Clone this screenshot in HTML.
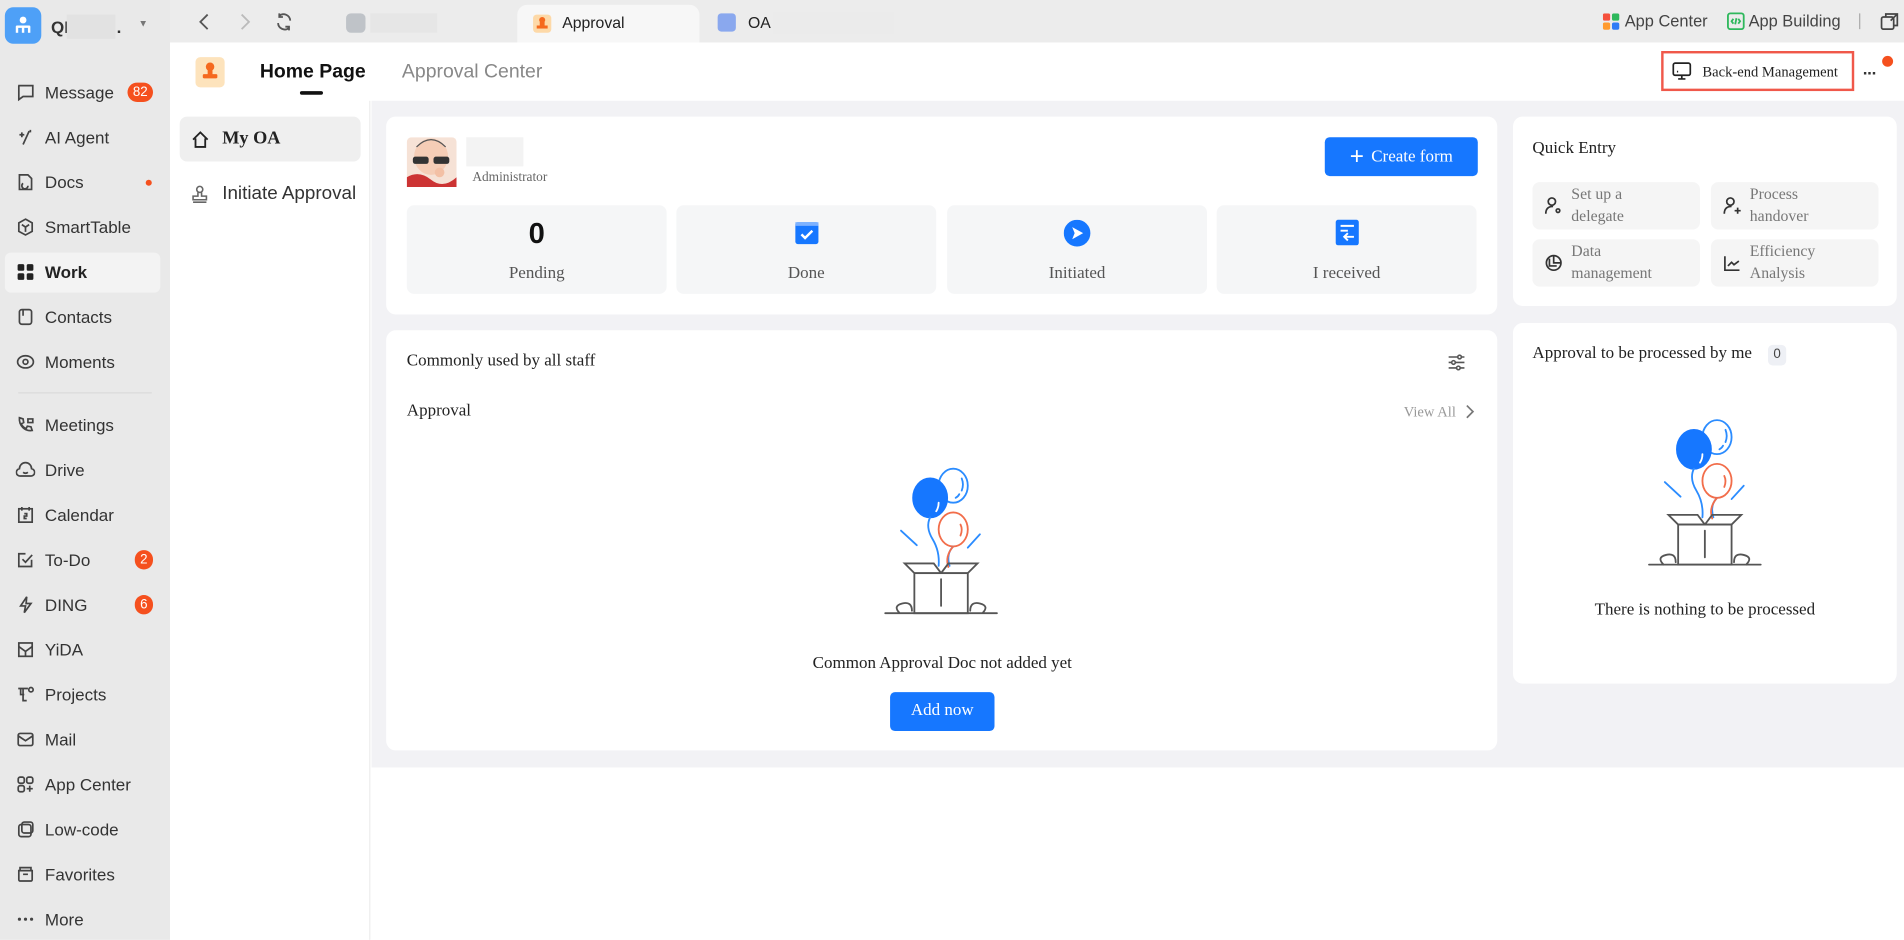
<!DOCTYPE html>
<html><head><meta charset="utf-8"><style>
*{box-sizing:border-box;margin:0;padding:0}
html,body{width:1904px;height:940px;overflow:hidden;background:#fff}
#s{position:absolute;left:0;top:0;width:1568px;height:774px;transform:scale(1.21429);transform-origin:0 0;font-family:"Liberation Sans",sans-serif;color:#333}
.a{position:absolute}
.serif{font-family:"Liberation Serif",serif}
.side{left:0;top:0;width:140px;height:774px;background:#e9e9e9}
.top{left:140px;top:0;width:1428px;height:35px;background:#ececec}
.it{position:absolute;left:13px;font-size:14px;color:#333;display:flex;align-items:center;height:20px}
.it svg{width:16px;height:16px;margin-right:8px;fill:none;stroke:#444;stroke-width:1.4}
.badge{position:absolute;background:#f5501e;color:#fff;font-size:11px;border-radius:9px;height:16px;line-height:16px;text-align:center}
.card{position:absolute;background:#fff;border-radius:8px}
.stat{position:absolute;top:169px;width:214px;height:73px;background:#f5f6f7;border-radius:6px;text-align:center}
.stat .l{position:absolute;left:0;right:0;top:49px;font-size:14px;color:#555;font-family:"Liberation Serif",serif}
.qe{position:absolute;width:138px;height:39px;background:#f5f5f5;border-radius:6px;font-family:"Liberation Serif",serif;font-size:13px;color:#777;line-height:18px}
.qe svg{position:absolute;left:10px;top:12px;width:15px;height:15px;fill:none;stroke:#333;stroke-width:1.4}
.qe span{position:absolute;left:32px;top:1px}
.btn{position:absolute;background:#1677ff;color:#fff;border-radius:4px;text-align:center;font-family:"Liberation Serif",serif}
</style></head><body><div id="s">
<div class="a side"></div>
<div class="a top"></div>
<!-- logo -->
<div class="a" style="left:4px;top:6px;width:30px;height:30px;background:#4ea0f7;border-radius:7px"></div>
<svg class="a" style="left:10px;top:12px" width="18" height="18" viewBox="0 0 18 18" fill="#fff"><circle cx="9" cy="4.5" r="2.8"/><rect x="3" y="9" width="12" height="2" rx="1"/><rect x="3" y="10" width="2" height="5"/><rect x="8" y="10" width="2" height="5"/><rect x="13" y="10" width="2" height="5"/></svg>
<div class="a" style="left:42px;top:14px;font-weight:bold;font-size:14px">QI</div>
<div class="a" style="left:55px;top:12px;width:40px;height:20px;background:#e2e2e2"></div>
<div class="a" style="left:96px;top:14px;font-weight:bold;font-size:14px">.</div>
<div class="a" style="left:114px;top:15px;font-size:8px;color:#777">▼</div>
<!-- side items -->
<div class="a" style="left:4px;top:208px;width:128px;height:33px;background:#f3f3f3;border-radius:5px"></div>
<div class="it" style="top:66px"><svg viewBox="0 0 16 16"><path d="M2 2.5h12v9H6l-3.5 2.5V2.5z"/></svg>Message</div>
<div class="badge" style="left:105px;top:68px;width:21px">82</div>
<div class="it" style="top:103px"><svg viewBox="0 0 16 16"><path d="M11 3L6 14M3 6h4M5 4v4M12 2v2"/></svg>AI Agent</div>
<div class="it" style="top:140px"><svg viewBox="0 0 16 16"><path d="M3 2h7l3 3v9H3z M6 9a2.5 2.5 0 1 0 4 2"/></svg>Docs</div>
<div class="a" style="left:120px;top:148px;width:5px;height:5px;border-radius:50%;background:#f5501e"></div>
<div class="it" style="top:177px"><svg viewBox="0 0 16 16"><path d="M8 1.5l5.5 3v7L8 14.5l-5.5-3v-7z M5 6l3 2 3-2M8 8v4"/></svg>SmartTable</div>
<div class="it" style="top:214px;font-weight:bold;color:#222"><svg viewBox="0 0 16 16" style="fill:#222;stroke:none"><rect x="1.5" y="1.5" width="5.5" height="5.5" rx="1.3"/><rect x="9" y="1.5" width="5.5" height="5.5" rx="1.3"/><rect x="1.5" y="9" width="5.5" height="5.5" rx="1.3"/><rect x="9" y="9" width="5.5" height="5.5" rx="1.3"/></svg>Work</div>
<div class="it" style="top:251px"><svg viewBox="0 0 16 16"><rect x="3" y="2" width="10" height="12" rx="2"/><path d="M6 2v5"/></svg>Contacts</div>
<div class="it" style="top:288px"><svg viewBox="0 0 16 16"><ellipse cx="8" cy="8" rx="6.5" ry="5"/><circle cx="8" cy="8" r="2"/></svg>Moments</div>
<div class="a" style="left:15px;top:323px;width:110px;height:1px;background:#dadada"></div>
<div class="it" style="top:340px"><svg viewBox="0 0 16 16"><path d="M3 2l3 1 .5 3-2 1a8 8 0 0 0 4 4l1-2 3 .5 1 3c-6 1-11-4-10.5-10.5zM10 3h4v3h-4z"/></svg>Meetings</div>
<div class="it" style="top:377px"><svg viewBox="0 0 16 16"><path d="M4 13a3 3 0 0 1-1-6 5 5 0 0 1 10 0 3 3 0 0 1-1 6z M6 10q2 1.5 4 0"/></svg>Drive</div>
<div class="it" style="top:414px"><svg viewBox="0 0 16 16"><rect x="2.5" y="3" width="11" height="11"/><path d="M5 1.5v3M11 1.5v3M7 7h2v2H7v2h2"/></svg>Calendar</div>
<div class="it" style="top:451px"><svg viewBox="0 0 16 16"><path d="M13 8v5.5H2.5V3H8M5.5 7.5l2.5 2.5 5.5-6"/></svg>To-Do</div>
<div class="badge" style="left:111px;top:453px;width:15px">2</div>
<div class="it" style="top:488px"><svg viewBox="0 0 16 16"><path d="M9 1.5L4 9h4l-1 5.5L12.5 7H8.5z"/></svg>DING</div>
<div class="badge" style="left:111px;top:490px;width:15px">6</div>
<div class="it" style="top:525px"><svg viewBox="0 0 16 16"><rect x="2.5" y="2.5" width="11" height="11"/><path d="M2.5 5.5l5.5 4 5.5-4M8 9.5v4"/></svg>YiDA</div>
<div class="it" style="top:562px"><svg viewBox="0 0 16 16"><path d="M2 3h8M4 3v5h3M6 3v10h3"/><circle cx="12.5" cy="4" r="1.8"/></svg>Projects</div>
<div class="it" style="top:599px"><svg viewBox="0 0 16 16"><rect x="2" y="3" width="12" height="10" rx="1.5"/><path d="M2 5l6 4 6-4"/></svg>Mail</div>
<div class="it" style="top:636px"><svg viewBox="0 0 16 16"><rect x="2" y="2" width="5" height="5" rx="1.5"/><rect x="9" y="2" width="5" height="5" rx="1.5"/><rect x="2" y="9" width="5" height="5" rx="1.5"/><path d="M11.5 9v5M9 11.5h5"/></svg>App Center</div>
<div class="it" style="top:673px"><svg viewBox="0 0 16 16"><rect x="2.5" y="4" width="10" height="10" rx="2"/><rect x="5" y="2" width="9" height="9" rx="2"/></svg>Low-code</div>
<div class="it" style="top:710px"><svg viewBox="0 0 16 16"><path d="M2.5 5V12.5a1 1 0 0 0 1 1h9a1 1 0 0 0 1-1V5zM3.5 5V2.5h9V5M6 8h4"/></svg>Favorites</div>
<div class="it" style="top:747px"><svg viewBox="0 0 16 16" style="fill:#444;stroke:none"><circle cx="3" cy="8" r="1.3"/><circle cx="8" cy="8" r="1.3"/><circle cx="13" cy="8" r="1.3"/></svg>More</div>
<!-- top bar -->
<svg class="a" style="left:160px;top:10px" width="16" height="16" viewBox="0 0 16 16" fill="none" stroke="#555" stroke-width="1.5"><path d="M11 2L5 8l6 6"/></svg>
<svg class="a" style="left:194px;top:10px" width="16" height="16" viewBox="0 0 16 16" fill="none" stroke="#bbb" stroke-width="1.5"><path d="M5 2l6 6-6 6"/></svg>
<svg class="a" style="left:226px;top:10px" width="16" height="16" viewBox="0 0 16 16" fill="none" stroke="#555" stroke-width="1.5"><path d="M3 9a5.5 5.5 0 0 0 9 4M13 7a5.5 5.5 0 0 0-9-4M4 1v3h3M12 15v-3H9"/></svg>
<div class="a" style="left:285px;top:11px;width:16px;height:16px;border-radius:4px;background:#bfc3c8"></div>
<div class="a" style="left:305px;top:11px;width:55px;height:16px;background:#e6e6e6"></div>
<div class="a" style="left:426px;top:4px;width:150px;height:31px;background:#f7f7f7;border-radius:8px 8px 0 0"></div>
<div class="a" style="left:439px;top:12px;width:15px;height:15px;border-radius:3px;background:#fdd9a8"></div>
<svg class="a" style="left:441px;top:13px" width="11" height="13" viewBox="0 0 11 13" fill="#f5691e"><circle cx="5.5" cy="3.5" r="2.5"/><rect x="3.5" y="5" width="4" height="4"/><rect x="1" y="8" width="9" height="2.5"/></svg>
<div class="a" style="left:463px;top:11px;font-size:13px;color:#222">Approval</div>
<div class="a" style="left:591px;top:11px;width:15px;height:15px;border-radius:3px;background:#8aa8ee"></div>
<div class="a" style="left:616px;top:11px;font-size:13px;color:#222">OA</div>
<div class="a" style="left:636px;top:10px;width:100px;height:18px;background:#ebebeb"></div>
<svg class="a" style="left:1320px;top:11px" width="14" height="14" viewBox="0 0 14 14"><rect width="6" height="6" rx="1.5" fill="#f5503c"/><rect x="7.5" width="6" height="6" rx="1.5" fill="#2eb85c"/><rect y="7.5" width="6" height="6" rx="1.5" fill="#ff9a2e"/><rect x="7.5" y="7.5" width="6" height="6" rx="1.5" fill="#2f7cf6"/></svg>
<div class="a" style="left:1338px;top:10px;font-size:13.5px;color:#444">App Center</div>
<svg class="a" style="left:1422px;top:10px" width="15" height="15" viewBox="0 0 15 15" fill="none" stroke="#2eb85c" stroke-width="1.5"><rect x="1" y="1" width="13" height="13" rx="2"/><path d="M5.5 5.5L4 7.5l1.5 2M9.5 5.5L11 7.5l-1.5 2M8 5L7 10"/></svg>
<div class="a" style="left:1440px;top:10px;font-size:13.5px;color:#444">App Building</div>
<div class="a" style="left:1531px;top:11px;width:1px;height:13px;background:#aaa"></div>
<svg class="a" style="left:1548px;top:10px" width="16" height="16" viewBox="0 0 16 16" fill="none" stroke="#444" stroke-width="1.4"><rect x="1.5" y="4" width="10" height="10" rx="1.5"/><path d="M5 4V1.5h9.5V11H11.5M9 7l5-5"/></svg>
<!-- header -->
<div class="a" style="left:140px;top:35px;width:1428px;height:48px;background:#fff"></div>
<div class="a" style="left:161px;top:47px;width:24px;height:25px;border-radius:4px;background:#fde3bc"></div>
<svg class="a" style="left:165px;top:50px" width="16" height="18" viewBox="0 0 16 18" fill="#f5691e"><circle cx="8" cy="5" r="3.5"/><rect x="6" y="7" width="4" height="5"/><rect x="2" y="11" width="12" height="3.5" rx="1"/></svg>
<div class="a" style="left:214px;top:51px;font-size:16px;font-weight:bold;color:#111">Home Page</div>
<div class="a" style="left:247px;top:75px;width:19px;height:3px;background:#111;border-radius:2px"></div>
<div class="a" style="left:331px;top:51px;font-size:16px;color:#888">Approval Center</div>
<div class="a" style="left:1368px;top:42px;width:159px;height:33px;border:2px solid #f0584a"></div>
<svg class="a" style="left:1377px;top:51px" width="16" height="15" viewBox="0 0 16 15" fill="none" stroke="#222" stroke-width="1.4"><rect x="1" y="1" width="14" height="10" rx="1.5"/><path d="M5 14h6M8 11v3M4 8h1"/></svg>
<div class="a serif" style="left:1402px;top:52px;font-size:12px;color:#222">Back-end Management</div>
<div class="a" style="left:1534px;top:52px;font-size:14px;font-weight:bold;letter-spacing:-1px">···</div>
<div class="a" style="left:1550px;top:46px;width:9px;height:9px;border-radius:50%;background:#f5501e"></div>
<!-- subnav -->
<div class="a" style="left:140px;top:83px;width:165px;height:691px;background:#fff;border-right:1px solid #eee"></div>
<div class="a" style="left:148px;top:96px;width:149px;height:37px;background:#efefef;border-radius:6px"></div>
<svg class="a" style="left:157px;top:107px" width="16" height="16" viewBox="0 0 16 16" fill="none" stroke="#222" stroke-width="1.5"><path d="M2 8l6-6 6 6M4 7v7h8V7"/></svg>
<div class="a serif" style="left:183px;top:106px;font-size:15px;font-weight:bold;color:#222">My OA</div>
<svg class="a" style="left:157px;top:152px" width="15" height="16" viewBox="0 0 15 16" fill="none" stroke="#666" stroke-width="1.3"><circle cx="7.5" cy="4" r="2.5"/><path d="M6 6.5v3H2v3h11v-3H9v-3M2 14.5h11"/></svg>
<div class="a" style="left:183px;top:151px;font-size:15.5px;color:#333">Initiate Approval</div>
<!-- main bg -->
<div class="a" style="left:306px;top:83px;width:1262px;height:549px;background:#f2f2f5"></div>
<!-- card1 -->
<div class="card" style="left:318px;top:96px;width:915px;height:163px"></div>
<svg class="a" style="left:335px;top:113px" width="41" height="41" viewBox="0 0 41 41"><rect width="41" height="41" rx="4" fill="#f6e2d6"/><ellipse cx="20" cy="16" rx="14" ry="15" fill="#f5cdb6"/><path d="M8 8q12-12 24 0" stroke="#555" fill="none"/><rect x="5" y="16" width="13" height="6" rx="2" fill="#333"/><rect x="22" y="16" width="13" height="6" rx="2" fill="#333"/><path d="M0 33q10-6 20 2t21-2V41H0z" fill="#c33"/><circle cx="27" cy="29" r="4" fill="#f3c0a5"/></svg>
<div class="a" style="left:384px;top:113px;width:47px;height:24px;background:#f3f3f3"></div>
<div class="a serif" style="left:389px;top:140px;font-size:11px;color:#666">Administrator</div>
<div class="btn" style="left:1091px;top:113px;width:126px;height:32px;line-height:32px;font-size:14px"><span style="font-family:'Liberation Sans';font-size:20px;vertical-align:-2px;margin-right:6px">+</span>Create form</div>
<div class="stat" style="left:335px"><div class="a" style="left:0;right:0;top:10px;font-size:24px;font-weight:bold;color:#111">0</div><div class="l">Pending</div></div>
<div class="stat" style="left:557px"><svg class="a" style="left:97px;top:12px" width="21" height="21" viewBox="0 0 21 21"><rect x="1" y="2" width="19" height="18" rx="2" fill="#1677ff"/><rect x="1" y="2" width="19" height="3" fill="#7db2ff"/><path d="M6 12l3 3 6-6" stroke="#fff" stroke-width="2" fill="none"/></svg><div class="l">Done</div></div>
<div class="stat" style="left:780px"><svg class="a" style="left:96px;top:12px" width="22" height="22" viewBox="0 0 22 22"><circle cx="11" cy="11" r="11" fill="#1677ff"/><path d="M7 6l9 5-9 5 2-5z" fill="#fff"/></svg><div class="l">Initiated</div></div>
<div class="stat" style="left:1002px"><svg class="a" style="left:97px;top:11px" width="21" height="23" viewBox="0 0 21 23"><rect x="1" y="1" width="19" height="21" rx="2" fill="#1677ff"/><path d="M5 6h11M5 10h6M16 15h-8M11 12l-3 3 3 3" stroke="#fff" stroke-width="1.6" fill="none"/></svg><div class="l">I received</div></div>
<!-- card2 -->
<div class="card" style="left:318px;top:272px;width:915px;height:346px"></div>
<div class="a serif" style="left:335px;top:290px;font-size:14px;color:#222">Commonly used by all staff</div>
<svg class="a" style="left:1192px;top:291px" width="15" height="15" viewBox="0 0 15 15" fill="none" stroke="#555" stroke-width="1.3"><path d="M1 3h13M1 7.5h13M1 12h13"/><circle cx="10" cy="3" r="1.5" fill="#fff"/><circle cx="5" cy="7.5" r="1.5" fill="#fff"/><circle cx="9" cy="12" r="1.5" fill="#fff"/></svg>
<div class="a serif" style="left:335px;top:331px;font-size:14px;color:#222">Approval</div>
<div class="a serif" style="left:1156px;top:332px;font-size:12px;color:#999">View All</div>
<svg class="a" style="left:1206px;top:333px" width="9" height="12" viewBox="0 0 9 12" fill="none" stroke="#777" stroke-width="1.4"><path d="M2 1l5 5-5 5"/></svg>
<svg class="a" style="left:725px;top:380px" width="100" height="130" viewBox="0 0 100 130" fill="none" stroke-width="1.5" stroke-linecap="round">
<ellipse cx="60" cy="20" rx="12" ry="14" stroke="#2b8cff"/><path d="M67 14q2 5 0 10M65 27q-1 2-3 3" stroke="#2b8cff"/>
<ellipse cx="41" cy="30" rx="14" ry="16" fill="#1677ff" stroke="#1677ff"/><path d="M48 34q0 4-2 7" stroke="#fff"/>
<ellipse cx="60" cy="56" rx="12" ry="14" stroke="#f26d4a"/><path d="M66 52q2 4 0 9" stroke="#f26d4a"/>
<path d="M41 46q-4 8 2 18t5 22M60 70q-6 6-3 16" stroke="#2b8cff"/><path d="M60 70q-7 8-4 17" stroke="#f26d4a"/>
<path d="M17 57l13 12M82 60l-10 11" stroke="#2b8cff"/>
<path d="M20 84h24l6 8H28zM80 84H56l-6 8h22z" stroke="#555"/>
<rect x="28" y="92" width="44" height="33" stroke="#555"/><path d="M50 97v22" stroke="#555"/>
<path d="M4 125h92M16 125q-6-6 2-8t8 6M84 125q6-6-2-8t-8 6" stroke="#555"/>
</svg>
<div class="a serif" style="left:566px;top:539px;width:420px;text-align:center;font-size:14px;color:#222">Common Approval Doc not added yet</div>
<div class="btn" style="left:733px;top:570px;width:86px;height:32px;line-height:32px;font-size:14px">Add now</div>
<!-- card3 -->
<div class="card" style="left:1246px;top:96px;width:316px;height:156px"></div>
<div class="a serif" style="left:1262px;top:115px;font-size:14px;color:#222">Quick Entry</div>
<div class="qe" style="left:1262px;top:150px"><svg viewBox="0 0 15 15"><circle cx="6" cy="4" r="3"/><path d="M1 14q0-6 6-6M11 10a1.5 1.5 0 1 0 .1 0"/></svg><span>Set up a<br>delegate</span></div>
<div class="qe" style="left:1409px;top:150px"><svg viewBox="0 0 15 15"><circle cx="6" cy="4" r="3"/><path d="M1 14q0-6 6-6M12 9v5M9.5 11.5h5"/></svg><span>Process<br>handover</span></div>
<div class="qe" style="left:1262px;top:197px"><svg viewBox="0 0 15 15"><circle cx="7.5" cy="7.5" r="6"/><path d="M7.5 1.5v6h6M4 4v6h6"/></svg><span>Data<br>management</span></div>
<div class="qe" style="left:1409px;top:197px"><svg viewBox="0 0 15 15"><path d="M1.5 2v11.5h12M4 10l3-3 2 2 4-3"/></svg><span>Efficiency<br>Analysis</span></div>
<!-- card4 -->
<div class="card" style="left:1246px;top:266px;width:316px;height:297px"></div>
<div class="a serif" style="left:1262px;top:284px;font-size:14px;color:#222">Approval to be processed by me</div>
<div class="a" style="left:1456px;top:284px;width:15px;height:17px;background:#eef0f5;border-radius:4px;font-size:11px;text-align:center;line-height:17px;color:#444">0</div>
<svg class="a" style="left:1354px;top:340px" width="100" height="130" viewBox="0 0 100 130" fill="none" stroke-width="1.5" stroke-linecap="round">
<ellipse cx="60" cy="20" rx="12" ry="14" stroke="#2b8cff"/><path d="M67 14q2 5 0 10M65 27q-1 2-3 3" stroke="#2b8cff"/>
<ellipse cx="41" cy="30" rx="14" ry="16" fill="#1677ff" stroke="#1677ff"/><path d="M48 34q0 4-2 7" stroke="#fff"/>
<ellipse cx="60" cy="56" rx="12" ry="14" stroke="#f26d4a"/><path d="M66 52q2 4 0 9" stroke="#f26d4a"/>
<path d="M41 46q-4 8 2 18t5 22M60 70q-6 6-3 16" stroke="#2b8cff"/><path d="M60 70q-7 8-4 17" stroke="#f26d4a"/>
<path d="M17 57l13 12M82 60l-10 11" stroke="#2b8cff"/>
<path d="M20 84h24l6 8H28zM80 84H56l-6 8h22z" stroke="#555"/>
<rect x="28" y="92" width="44" height="33" stroke="#555"/><path d="M50 97v22" stroke="#555"/>
<path d="M4 125h92M16 125q-6-6 2-8t8 6M84 125q6-6-2-8t-8 6" stroke="#555"/>
</svg>
<div class="a serif" style="left:1246px;top:495px;width:316px;text-align:center;font-size:14px;color:#222">There is nothing to be processed</div>
</div></body></html>
